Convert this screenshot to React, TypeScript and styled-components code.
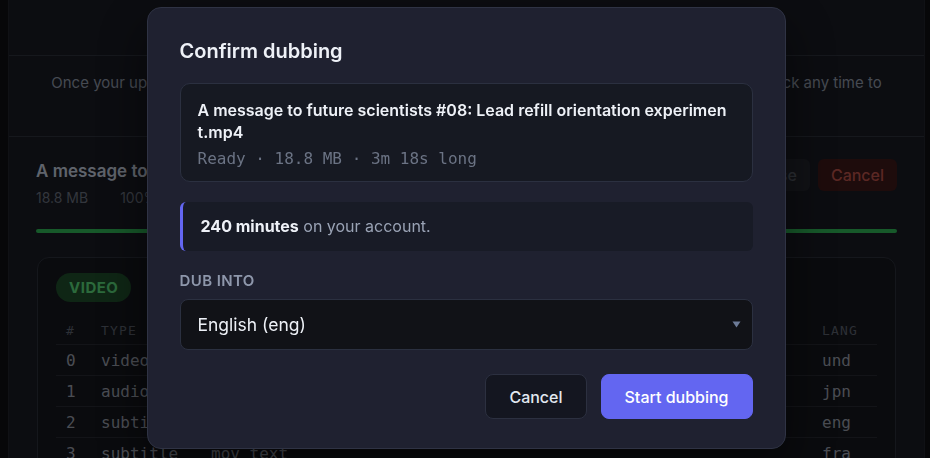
import React from "react";
import styled, { createGlobalStyle } from "styled-components";

const Global = createGlobalStyle`
  html, body { margin: 0; padding: 0; background: #0e0e12; }
  body { font-family: Inter, "Noto Sans", sans-serif; overflow: hidden; }
  * { box-sizing: border-box; }
`;

const Page = styled.div`
  height: 458px;
  padding-left: 8px;
  background: #0e0e12;
  overflow: hidden;
`;

const Panel = styled.div`
  width: 917px;
  height: 100%;
  background: #181a22;
  border-left: 1px solid #20232b;
  border-right: 1px solid #20232b;
`;

const Header = styled.div`
  height: 56px;
  border-bottom: 1px solid #2c303a;
`;

const Notice = styled.div`
  height: 81px;
  border-bottom: 1px solid #2c303a;
  padding: 16px 40px 0;
  text-align: center;
  color: #8c94a4;
  font-size: 15px;
  line-height: 22px;
`;

const Job = styled.div`
  padding: 22px 27px 0 27px;
`;

const JobTop = styled.div`
  display: flex;
  justify-content: space-between;
  align-items: flex-start;
`;

const JobTitle = styled.div`
  color: #bec6d6;
  font-size: 17px;
  font-weight: 600;
  line-height: 24px;
  white-space: nowrap;
`;

const JobMeta = styled.div`
  display: flex;
  gap: 32px;
  color: #666c7a;
  font-size: 14px;
  line-height: 20px;
  margin-top: 5px;
`;

const JobActions = styled.div`
  display: flex;
  gap: 8px;
`;

const GhostBtn = styled.div<{ $danger?: boolean }>`
  height: 32px;
  padding: 0 13px;
  border-radius: 6px;
  display: flex;
  align-items: center;
  font-size: 16px;
  font-weight: 500;
  background: ${(p) => (p.$danger ? "#3c1818" : "#22242c")};
  color: ${(p) => (p.$danger ? "#b65048" : "#565c66")};
`;

const Progress = styled.div`
  margin-top: 21px;
  height: 4px;
  border-radius: 2px;
  background: #2eb254;
`;

const TrackCard = styled.div`
  margin: 24px 1px 0;
  border: 1px solid #2a2e38;
  border-radius: 12px;
  background: #14161c;
  padding: 15px 18px 0;
  height: 230px;
`;

const Pill = styled.div`
  display: inline-flex;
  align-items: center;
  height: 29px;
  padding: 0 13px;
  border-radius: 15px;
  background: #1e4c2a;
  color: #58d478;
  font-size: 15px;
  font-weight: 700;
  letter-spacing: 0.5px;
`;

const Table = styled.div`
  margin-top: 15px;
  font-family: "DejaVu Sans Mono", "Liberation Mono", monospace;
`;

const Row = styled.div<{ $head?: boolean }>`
  display: grid;
  grid-template-columns: 35px 110px 1fr 55px;
  height: ${(p) => (p.$head ? "28px" : "31px")};
  align-items: center;
  border-bottom: 1px solid #262830;
  font-size: ${(p) => (p.$head ? "13px" : "16px")};
  color: ${(p) => (p.$head ? "#5a606c" : "#949aa6")};
  letter-spacing: ${(p) => (p.$head ? "1.2px" : "0")};
  padding-left: 10px;
`;

const Backdrop = styled.div`
  position: fixed;
  inset: 0;
  background: rgba(0, 0, 0, 0.5);
  display: flex;
  align-items: center;
  justify-content: center;
`;

const Modal = styled.div`
  width: 639px;
  height: 442px;
  margin-left: 2px;
  margin-top: -2px;
  background: #1f2130;
  border: 1px solid #2f3344;
  border-radius: 14px;
  padding: 29px 32px 28px;
  display: flex;
  flex-direction: column;
  color: #e6eaf2;
  box-shadow: 0 20px 50px rgba(0, 0, 0, 0.5);
`;

const Title = styled.h2`
  margin: 0;
  font-size: 20px;
  font-weight: 600;
  line-height: 28px;
  color: #eef1f7;
`;

const FileCard = styled.div`
  margin-top: 18px;
  background: #161922;
  border: 1px solid #2b3040;
  border-radius: 10px;
  padding: 15px 17px 12px;
`;

const FileName = styled.div`
  font-size: 16px;
  font-weight: 600;
  line-height: 22px;
  color: #eef1f7;
  word-break: break-all;
`;

const FileMeta = styled.div`
  margin-top: 6px;
  font-family: "DejaVu Sans Mono", "Liberation Mono", monospace;
  font-size: 16px;
  line-height: 20px;
  color: #6b7384;
`;

const Balance = styled.div`
  margin-top: 20px;
  background: #181b26;
  border-left: 3px solid #6366f1;
  border-radius: 6px;
  padding: 14px 18px;
  font-size: 16px;
  line-height: 21px;
  color: #9aa3b5;
  strong {
    color: #eef1f7;
    font-weight: 700;
  }
`;

const Label = styled.div`
  margin-top: 20px;
  font-size: 15px;
  font-weight: 600;
  letter-spacing: 0.4px;
  line-height: 20px;
  color: #8e97ab;
  text-transform: uppercase;
`;

const Select = styled.div`
  margin-top: 8px;
  height: 51px;
  background: #111217;
  border: 1px solid #2b3040;
  border-radius: 8px;
  display: flex;
  align-items: center;
  justify-content: space-between;
  padding: 0 11px 0 17px;
  font-size: 17.5px;
  color: #eef1f7;
`;

const Actions = styled.div`
  margin-top: 24px;
  display: flex;
  justify-content: flex-end;
  gap: 14px;
`;

const Button = styled.div<{ $primary?: boolean }>`
  height: 45px;
  padding: 0 23px;
  border-radius: 8px;
  display: flex;
  align-items: center;
  font-size: 16px;
  font-weight: 500;
  color: ${(p) => (p.$primary ? "#ffffff" : "#e2e8f0")};
  background: ${(p) => (p.$primary ? "#6366f1" : "#141620")};
  border: 1px solid ${(p) => (p.$primary ? "#6366f1" : "#2c3040")};
`;

const tracks = [
  ["0", "video", "h264", "und"],
  ["1", "audio", "aac", "jpn"],
  ["2", "subtitle", "mov_text", "eng"],
  ["3", "subtitle", "mov_text", "fra"],
];

export default function App() {
  return (
    <>
      <Global />
      <Page>
        <Panel>
          <Header />
          <Notice>
            Once your upload is processed, each of its tracks is listed below with its codec and language. Come back any time to
            check how your dubbing job is doing.
          </Notice>
          <Job>
            <JobTop>
              <div>
                <JobTitle>A message to future scientists #08: Lead refill orientation experiment.mp4</JobTitle>
                <JobMeta>
                  <span>18.8 MB</span>
                  <span>100%</span>
                </JobMeta>
              </div>
              <JobActions>
                <GhostBtn>Close</GhostBtn>
                <GhostBtn $danger>Cancel</GhostBtn>
              </JobActions>
            </JobTop>
            <Progress />
            <TrackCard>
              <Pill>VIDEO</Pill>
              <Table>
                <Row $head>
                  <span>#</span>
                  <span>TYPE</span>
                  <span>CODEC</span>
                  <span>LANG</span>
                </Row>
                {tracks.map((t) => (
                  <Row key={t[0]}>
                    {t.map((c, i) => (
                      <span key={i}>{c}</span>
                    ))}
                  </Row>
                ))}
              </Table>
            </TrackCard>
          </Job>
        </Panel>
      </Page>
      <Backdrop>
        <Modal>
          <Title>Confirm dubbing</Title>
          <FileCard>
            <FileName>A message to future scientists #08: Lead refill orientation experiment.mp4</FileName>
            <FileMeta>Ready · 18.8 MB · 3m 18s long</FileMeta>
          </FileCard>
          <Balance>
            <strong>240 minutes</strong> on your account.
          </Balance>
          <Label>Dub into</Label>
          <Select>
            <span>English (eng)</span>
            <svg width="9" height="7" viewBox="0 0 9 7">
              <path d="M0.5 0.5h8L4.5 6.5z" fill="#6d7b98" />
            </svg>
          </Select>
          <Actions>
            <Button>Cancel</Button>
            <Button $primary>Start dubbing</Button>
          </Actions>
        </Modal>
      </Backdrop>
    </>
  );
}
